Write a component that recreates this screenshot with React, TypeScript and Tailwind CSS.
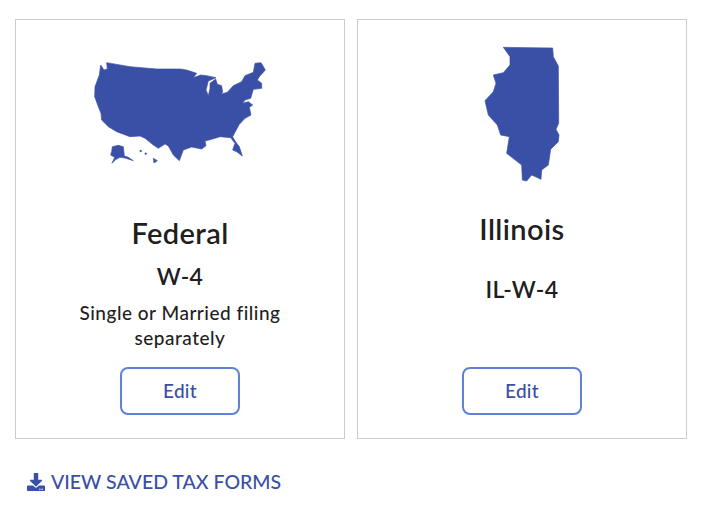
import type { FC } from "react";
import { FaDownload } from "react-icons/fa";

const usPath =
  "M80 68 L150 80 L230 87 L300 87 L320 90 L350 100 L340 113 L362 105 L380 107 L408 113 L385 123 L378 150 L385 167 L390 145 L390 130 L407 117 L412 133 L425 137 L428 157 L422 163 L442 157 L460 137 L485 125 L495 107 L520 97 L525 70 L543 68 L556 90 L538 110 L532 120 L545 130 L545 145 L520 148 L512 175 L495 180 L488 190 L505 185 L518 195 L508 202 L513 225 L495 235 L478 253 L465 277 L458 290 L465 303 L478 320 L487 348 L470 335 L458 330 L465 310 L452 293 L420 290 L395 298 L375 303 L378 317 L365 327 L335 321 L310 330 L298 362 L280 345 L265 318 L255 312 L235 325 L220 315 L195 295 L180 288 L150 290 L110 275 L85 260 L65 240 L63 220 L55 200 L44 170 L45 140 L58 105 L62 75 L72 90 L82 87 Z M97 320 L115 316 L130 320 L133 348 L145 352 L160 362 L135 354 L120 352 L108 358 L96 370 L104 352 L92 345 L95 335 Z M220 355 L232 362 L222 369 Z M180 331 L184 331 L184 335 L180 335 Z M195 339 L199 339 L199 343 L195 343 Z";

const ilPath =
  "M130 22 L278 24 L280 50 L295 78 L296 250 L288 268 L297 285 L295 305 L272 328 L265 375 L245 390 L243 418 L215 405 L200 423 L187 420 L185 375 L140 340 L148 290 L122 285 L112 255 L85 225 L75 182 L100 155 L108 130 L100 105 L130 98 L150 75 L150 50 Z";

interface TaxCardProps {
  title: string;
  form: string;
  status?: string;
  path: string;
  mapClass: string;
  titleClass: string;
  formClass: string;
  viewBox: string;
}

const TaxCard: FC<TaxCardProps> = ({ title, form, status, path, mapClass, titleClass, formClass, viewBox }) => {
  return (
    <div className="flex flex-col items-center w-[330px] h-[420px] border border-[#cccccc] pb-[23px]">
      <svg viewBox={viewBox} className={mapClass}>
        <path d={path} fill="#3a50a6" stroke="#3a50a6" strokeWidth={2} strokeLinejoin="round" />
      </svg>
      <h2 className={titleClass}>{title}</h2>
      <p className={formClass}>{form}</p>
      {status && (
        <p className="mt-[9px] w-[240px] text-center text-[19px] leading-[25px] tracking-[0.5px] font-medium text-[#1f1f1f]">
          {status}
        </p>
      )}
      <button
        type="button"
        className="mt-auto w-[120px] h-[48px] rounded-lg border-2 border-[#5f82d8] bg-white text-[19px] tracking-[0.3px] font-medium text-[#3a50a6]"
      >
        Edit
      </button>
    </div>
  );
};

export default function App() {
  return (
    <div className="w-[723px] h-[506px] bg-white pt-[19px] pl-[15px] font-['Lato',sans-serif]">
      <div className="flex gap-[12px]">
        <TaxCard
          title="Federal"
          form="W-4"
          status="Single or Married filing separately"
          path={usPath}
          viewBox="0 0 600 420"
          mapClass="w-[200px] h-[140px] mt-[20px] shrink-0"
          titleClass="mt-[33px] text-[29px] leading-[40px] tracking-[0.4px] font-semibold text-[#1f1f1f]"
          formClass="mt-[8px] text-[23px] leading-[30px] tracking-[0.4px] font-semibold text-[#1f1f1f]"
        />
        <TaxCard
          title="Illinois"
          form="IL-W-4"
          path={ilPath}
          viewBox="0 0 360 450"
          mapClass="w-[120px] h-[150px] mt-[20px] mr-[4px] shrink-0"
          titleClass="mt-[19px] text-[29px] leading-[40px] tracking-[0.4px] font-semibold text-[#1f1f1f]"
          formClass="mt-[25px] text-[23px] leading-[30px] tracking-[0.4px] font-semibold text-[#1f1f1f]"
        />
      </div>
      <a className="mt-[31px] ml-[12px] flex items-center gap-[6px] text-[19.5px] leading-[24px] font-medium text-[#3a50a6]">
        <FaDownload size={18} />
        VIEW SAVED TAX FORMS
      </a>
    </div>
  );
}
